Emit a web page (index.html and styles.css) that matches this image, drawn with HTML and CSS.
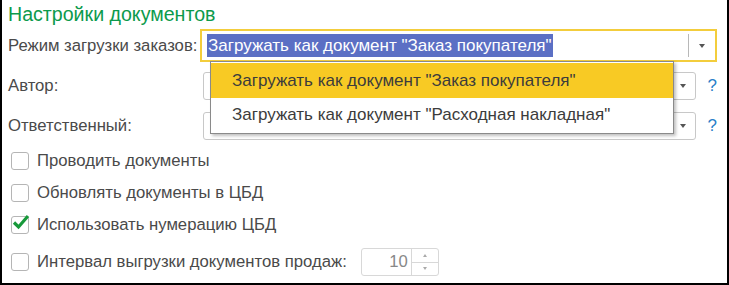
FILE: index.html
```html
<!DOCTYPE html>
<html lang="ru">
<head>
    <meta charset="UTF-8">
    <title>Настройки документов</title>
    <link rel="stylesheet" href="styles.css">
</head>
<body>
    <div class="frame">
        <h1 class="title">Настройки документов</h1>

        <div class="row row-mode">
            <label class="label">Режим загрузки заказов:</label>
            <div class="field field-active">
                <span class="value"><span class="selected">Загружать как документ "Заказ покупателя"</span></span>
                <span class="drop"><span class="arrow"></span></span>
            </div>
            <div class="popup">
                <div class="item item-current">Загружать как документ "Заказ покупателя"</div>
                <div class="item">Загружать как документ "Расходная накладная"</div>
            </div>
        </div>

        <div class="row row-author">
            <label class="label">Автор:</label>
            <div class="field">
                <span class="value"></span>
                <span class="drop"><span class="arrow"></span></span>
            </div>
            <span class="help">?</span>
        </div>

        <div class="row row-resp">
            <label class="label">Ответственный:</label>
            <div class="field">
                <span class="value"></span>
                <span class="drop"><span class="arrow"></span></span>
            </div>
            <span class="help">?</span>
        </div>

        <div class="checks">
            <label class="check"><span class="box"></span>Проводить документы</label>
            <label class="check"><span class="box"></span>Обновлять документы в ЦБД</label>
            <label class="check"><span class="box">
                <svg class="tick" width="18" height="16" viewBox="0 0 18 16"><path d="M2 8.5 L6.5 13 L16 2" fill="none" stroke="#17993a" stroke-width="3.2"/></svg>
            </span>Использовать нумерацию ЦБД</label>
            <div class="check check-last">
                <span class="box"></span>Интервал выгрузки документов продаж:
                <div class="number">
                    <span class="num">10</span>
                    <span class="spin"><span class="up"></span><span class="down"></span></span>
                </div>
            </div>
        </div>
    </div>
</body>
</html>
```

FILE: styles.css
```css
html, body {
    margin: 0;
    padding: 0;
    background: #fff;
}
body {
    font-family: "Liberation Sans", Arial, sans-serif;
    font-size: 16.7px;
    color: #4a4a4a;
}
.frame {
    width: 729px;
    height: 285px;
    box-sizing: border-box;
    border: 2px solid #000;
    border-top: none;
    padding: 2px 10px 0 6px;
}
.title {
    margin: 0;
    font-size: 19.6px;
    font-weight: normal;
    color: #0c9a4c;
    line-height: 25px;
}
.row {
    position: relative;
    display: flex;
    align-items: center;
    height: 34px;
}
.row-mode {
    height: 35px;
    margin-top: 1px;
}
.row-author {
    height: 36px;
    margin-top: 5px;
}
.row-resp {
    margin-top: 5px;
}
.label {
    width: 192px;
    flex: none;
}
.field {
    display: flex;
    width: 496px;
    height: 28px;
    box-sizing: border-box;
    border: 1px solid #c8c8c8;
    border-radius: 3px;
    background: #fff;
    margin-left: 3px;
}
.field-active {
    width: 519px;
    height: 33px;
    border: 2px solid #f3cd3c;
    border-radius: 0;
    margin-left: 0;
}
.value {
    flex: 1;
    display: flex;
    align-items: center;
    padding-left: 5px;
}
.selected {
    background: #5b6fc4;
    color: #fff;
    font-size: 17px;
    line-height: 23px;
    padding: 0 1px;
}
.drop {
    width: 24px;
    display: flex;
    align-items: center;
    justify-content: center;
}
.field-active .drop {
    border-left: 1px solid #b8b8b8;
    margin: 3px 0;
    width: 26px;
}
.arrow {
    width: 0;
    height: 0;
    border-left: 3px solid transparent;
    border-right: 3px solid transparent;
    border-top: 4px solid #555;
}
.help {
    margin-left: 12px;
    color: #2a7fc9;
    font-size: 17px;
}
.popup {
    position: absolute;
    left: 202px;
    top: 33px;
    width: 464px;
    box-sizing: border-box;
    border: 1px solid #8a8a8a;
    background: #fff;
    box-shadow: 2px 2px 3px rgba(0, 0, 0, 0.25);
    z-index: 2;
    padding: 1px 0 2px;
}
.item {
    height: 33px;
    line-height: 33px;
    padding-left: 21px;
    font-size: 17px;
    color: #3c3c3c;
}
.item-current {
    height: 35px;
    line-height: 35px;
    background: #f8ca24;
}
.checks {
    display: flex;
    flex-direction: column;
    padding-top: 2px;
}
.check {
    display: flex;
    align-items: center;
    height: 32px;
}
.check-last {
    height: 42px;
}
.box {
    position: relative;
    width: 18px;
    height: 18px;
    box-sizing: border-box;
    border: 1px solid #b5b5b5;
    border-radius: 3px;
    margin: 0 8px 0 3px;
    flex: none;
}
.tick {
    position: absolute;
    left: 0;
    top: -3px;
}
.number {
    display: flex;
    width: 78px;
    height: 28px;
    box-sizing: border-box;
    border: 1px solid #d8d8d8;
    border-radius: 3px;
    margin-left: 14px;
}
.num {
    flex: 1;
    text-align: right;
    line-height: 26px;
    padding-right: 3px;
    color: #888;
}
.spin {
    width: 26px;
    display: flex;
    flex-direction: column;
    border-left: 1px solid #d8d8d8;
}
.up, .down {
    flex: 1;
    display: flex;
    align-items: center;
    justify-content: center;
}
.up {
    border-bottom: 1px solid #d8d8d8;
}
.up::after {
    content: "";
    border-left: 2px solid transparent;
    border-right: 2px solid transparent;
    border-bottom: 3px solid #aaa;
}
.down::after {
    content: "";
    border-left: 2px solid transparent;
    border-right: 2px solid transparent;
    border-top: 3px solid #aaa;
}
```
